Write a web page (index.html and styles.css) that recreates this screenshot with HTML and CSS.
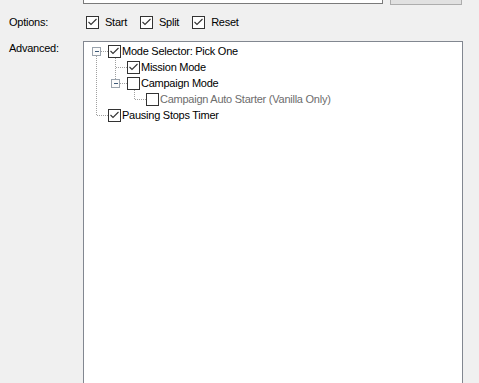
FILE: index.html
```html
<!DOCTYPE html>
<html lang="en">
<head>
  <meta charset="utf-8">
  <title>Settings</title>
  <link rel="stylesheet" href="styles.css">
</head>
<body>
<div class="settings">
  <div class="label top-label">Path:</div>
  <div class="top-row">
    <div class="textbox"></div>
    <div class="button"></div>
  </div>

  <div class="label options-label">Options:</div>
  <div class="options">
    <label class="option"><span class="check on"></span>Start</label>
    <label class="option"><span class="check on"></span>Split</label>
    <label class="option"><span class="check on"></span>Reset</label>
  </div>

  <div class="label advanced-label">Advanced:</div>
  <div class="tree">
    <svg class="tree-lines" width="100" height="90" viewBox="0 0 100 90">
      <g stroke="#a0a0a0" stroke-width="1" stroke-dasharray="1 1" shape-rendering="crispEdges">
        <!-- level 0 -->
        <line x1="12.5" y1="14" x2="12.5" y2="73"/>
        <line x1="17" y1="9.5" x2="24" y2="9.5"/>
        <line x1="13" y1="73.5" x2="24" y2="73.5"/>
        <!-- level 1 -->
        <line x1="31.5" y1="16" x2="31.5" y2="37"/>
        <line x1="32" y1="25.5" x2="43" y2="25.5"/>
        <line x1="36" y1="41.5" x2="43" y2="41.5"/>
        <!-- level 2 -->
        <line x1="50.5" y1="48" x2="50.5" y2="57"/>
        <line x1="51" y1="57.5" x2="62" y2="57.5"/>
      </g>
      <g shape-rendering="crispEdges">
        <rect x="8.5" y="5.5" width="8" height="8" fill="#fbfbfb" stroke="#9aa3ad"/>
        <line x1="10.5" y1="9.5" x2="15" y2="9.5" stroke="#3e5a78"/>
        <rect x="27.5" y="37.5" width="8" height="8" fill="#fbfbfb" stroke="#9aa3ad"/>
        <line x1="29.5" y1="41.5" x2="34" y2="41.5" stroke="#3e5a78"/>
      </g>
    </svg>
    <div class="node level-0"><span class="check on"></span>Mode Selector: Pick One</div>
    <div class="node level-1"><span class="check on"></span>Mission Mode</div>
    <div class="node level-1"><span class="check"></span>Campaign Mode</div>
    <div class="node level-2 disabled"><span class="check"></span>Campaign Auto Starter (Vanilla Only)</div>
    <div class="node level-0"><span class="check on"></span>Pausing Stops Timer</div>
  </div>
</div>
</body>
</html>
```

FILE: styles.css
```css
html, body {
  margin: 0;
  height: 100%;
  overflow: hidden;
}
body {
  background-color: #f0f0f0;
  font-family: 'Liberation Sans', Arial, sans-serif;
  font-size: 11px;
  letter-spacing: -0.25px;
  color: #000000;
}
.settings {
  display: grid;
  grid-template-columns: 74px 380px;
  padding-left: 9px;
  margin-top: -19px;
}
.label {
  line-height: 13px;
}
.top-label {
  padding-top: 8px;
}
.top-row {
  display: flex;
  height: 23px;
}
.textbox {
  box-sizing: border-box;
  width: 300px;
  height: 23px;
  background-color: #ffffff;
  border: 1px solid #7a7a7a;
}
.button {
  box-sizing: border-box;
  width: 72px;
  height: 23px;
  margin-left: 7px;
  margin-top: 1px;
  background-color: #e1e1e1;
  border: 1px solid #adadad;
}
.options-label {
  padding-top: 12px;
}
.options {
  display: flex;
  padding-top: 12px;
  padding-left: 3px;
  height: 13px;
}
.option {
  display: flex;
  align-items: center;
  line-height: 13px;
  margin-right: 13px;
}
.option .check {
  margin-right: 6px;
}
.check {
  box-sizing: border-box;
  display: inline-block;
  flex: none;
  width: 13px;
  height: 13px;
  background-color: #ffffff;
  border: 1px solid #333333;
}
.check.on {
  background-image: url("data:image/svg+xml;utf8,<svg xmlns='http://www.w3.org/2000/svg' width='11' height='11' viewBox='0 0 11 11'><polyline points='1.5,5 4,7.5 9.5,2' fill='none' stroke='%23333333' stroke-width='1.1'/></svg>");
  background-repeat: no-repeat;
}
.advanced-label {
  padding-top: 13px;
}
.tree {
  position: relative;
  box-sizing: border-box;
  width: 380px;
  height: 400px;
  margin-top: 12px;
  padding-top: 1px;
  background-color: #ffffff;
  border: 1px solid #828790;
}
.tree-lines {
  position: absolute;
  left: 0;
  top: 0;
}
.node {
  display: flex;
  align-items: center;
  height: 16px;
  white-space: nowrap;
}
.node .check {
  margin-right: 1px;
}
.level-0 {
  padding-left: 24px;
}
.level-1 {
  padding-left: 43px;
}
.level-2 {
  padding-left: 62px;
}
.disabled {
  color: #6d6d6d;
}
```
